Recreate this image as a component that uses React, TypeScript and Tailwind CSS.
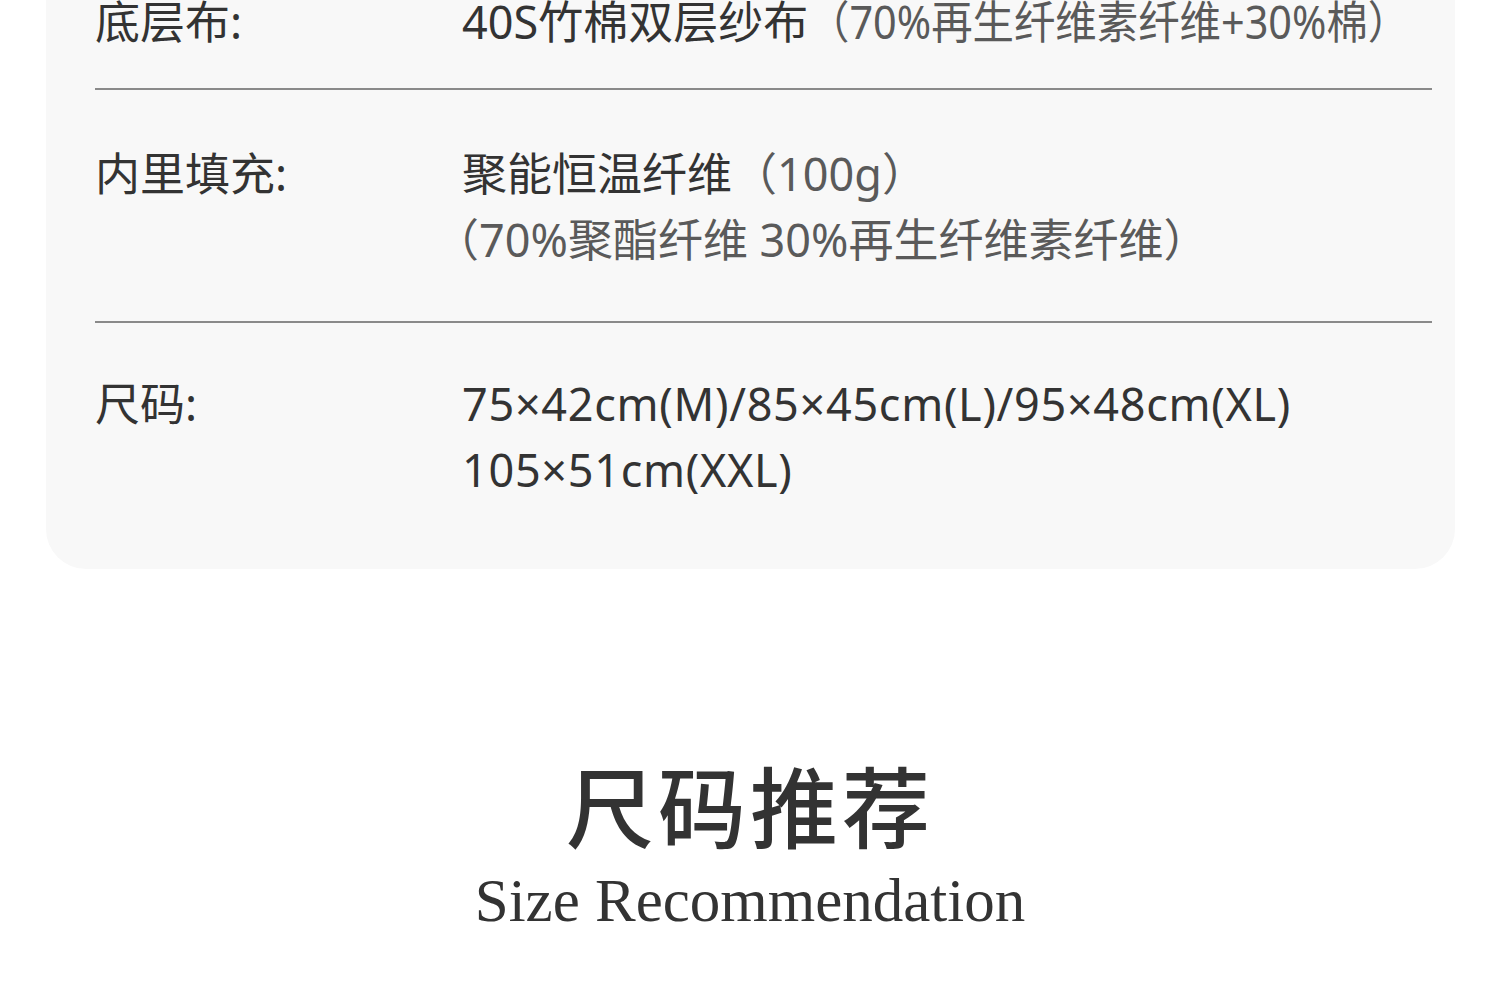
import React from 'react';

const sans = { fontFamily: '"Noto Sans", "Noto Sans CJK SC", sans-serif' };

type Spec = {
  label: string;
  lines: React.ReactNode[];
  pad: string;
  divider: boolean;
};

const specs: Spec[] = [
  {
    label: '底层布:',
    lines: [
      <>
        40S竹棉双层纱布
        <span className="inline-block origin-left scale-x-[0.92] text-[#5a5a5a]">（70%再生纤维素纤维+30%棉）</span>
      </>,
    ],
    pad: 'pt-0 pb-[33px]',
    divider: true,
  },
  {
    label: '内里填充:',
    lines: [
      <>
        聚能恒温纤维<span className="text-[#5a5a5a]">（100g）</span>
      </>,
      <span className="-ml-[28px] text-[#5a5a5a]">（70%聚酯纤维 30%再生纤维素纤维）</span>,
    ],
    pad: 'pt-[51px] pb-[48px]',
    divider: true,
  },
  {
    label: '尺码:',
    lines: [
      <span className="tracking-[0.7px]">75×42cm(M)/85×45cm(L)/95×48cm(XL)</span>,
      <span className="tracking-[0.7px]">105×51cm(XXL)</span>,
    ],
    pad: 'pt-[48px] pb-[66px]',
    divider: false,
  },
];

function SpecRow({ spec }: { spec: Spec }) {
  return (
    <>
      <div className={`flex ${spec.pad}`}>
        <div className="w-[367px] shrink-0">{spec.label}</div>
        <div className="flex flex-col">
          {spec.lines.map((line, i) => (
            <div key={i} className="whitespace-nowrap">{line}</div>
          ))}
        </div>
      </div>
      {spec.divider && <div className="h-[2px] bg-[#8a8a8a]" />}
    </>
  );
}

export default function App() {
  return (
    <div className="w-[1500px] h-[1000px] overflow-hidden bg-white" style={sans}>
      {/* spec card, top is cropped off */}
      <div className="ml-[46px] w-[1409px] -mt-[11px] bg-[#f8f8f8] rounded-b-[40px] pl-[49px] pr-[23px] text-[45px] leading-[66px] text-[#333]">
        {specs.map((s) => (
          <SpecRow key={s.label} spec={s} />
        ))}
      </div>

      {/* section title */}
      <div className="flex flex-col items-center pt-[188px]">
        <div className="text-[88px] leading-[100px] font-medium tracking-[4px] text-[#333]">尺码推荐</div>
        <div
          className="mt-[9px] text-[61px] leading-[70px] text-[#333]"
          style={{ fontFamily: '"Liberation Serif", serif' }}
        >
          Size Recommendation
        </div>
      </div>
    </div>
  );
}
